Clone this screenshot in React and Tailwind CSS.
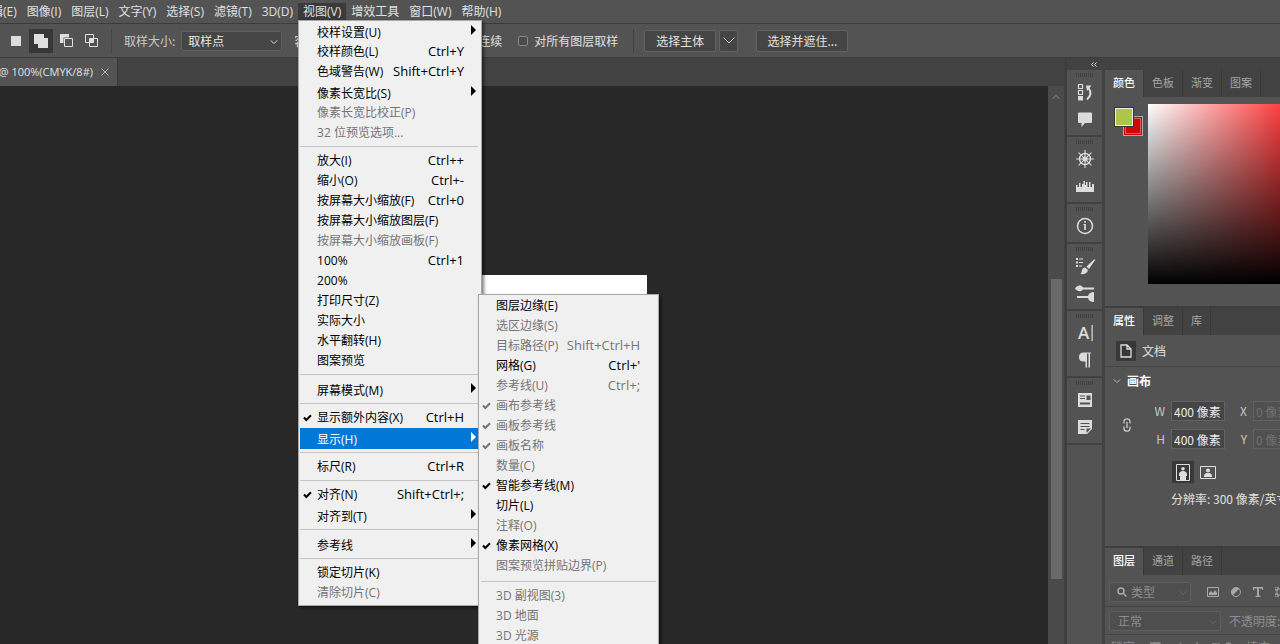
import React, { useState } from 'react';

const menuFont = "font-['Open_Sans','Noto_Sans_CJK_SC',sans-serif]";

const menuBar = ['编辑(E)', '图像(I)', '图层(L)', '文字(Y)', '选择(S)', '滤镜(T)', '3D(D)', '视图(V)', '增效工具', '窗口(W)', '帮助(H)'];

const viewMenu = [
  { label: '校样设置(U)', arrow: true },
  { label: '校样颜色(L)', keys: 'Ctrl+Y' },
  { label: '色域警告(W)', keys: 'Shift+Ctrl+Y' },
  { label: '像素长宽比(S)', arrow: true },
  { label: '像素长宽比校正(P)', disabled: true },
  { label: '32 位预览选项...', disabled: true },
  null,
  { label: '放大(I)', keys: 'Ctrl++' },
  { label: '缩小(O)', keys: 'Ctrl+-' },
  { label: '按屏幕大小缩放(F)', keys: 'Ctrl+0' },
  { label: '按屏幕大小缩放图层(F)' },
  { label: '按屏幕大小缩放画板(F)', disabled: true },
  { label: '100%', keys: 'Ctrl+1' },
  { label: '200%' },
  { label: '打印尺寸(Z)' },
  { label: '实际大小' },
  { label: '水平翻转(H)' },
  { label: '图案预览' },
  null,
  { label: '屏幕模式(M)', arrow: true },
  null,
  { label: '显示额外内容(X)', keys: 'Ctrl+H', checked: true },
  { label: '显示(H)', arrow: true, open: true },
  null,
  { label: '标尺(R)', keys: 'Ctrl+R' },
  null,
  { label: '对齐(N)', keys: 'Shift+Ctrl+;', checked: true },
  { label: '对齐到(T)', arrow: true },
  null,
  { label: '参考线', arrow: true },
  null,
  { label: '锁定切片(K)' },
  { label: '清除切片(C)', disabled: true },
];

const showMenu = [
  { label: '图层边缘(E)' },
  { label: '选区边缘(S)', disabled: true },
  { label: '目标路径(P)', keys: 'Shift+Ctrl+H', disabled: true },
  { label: '网格(G)', keys: "Ctrl+'" },
  { label: '参考线(U)', keys: 'Ctrl+;', disabled: true },
  { label: '画布参考线', checked: true, disabled: true },
  { label: '画板参考线', checked: true, disabled: true },
  { label: '画板名称', checked: true, disabled: true },
  { label: '数量(C)', disabled: true },
  { label: '智能参考线(M)', checked: true },
  { label: '切片(L)' },
  { label: '注释(O)', disabled: true },
  { label: '像素网格(X)', checked: true },
  { label: '图案预览拼贴边界(P)', disabled: true },
  null,
  { label: '3D 副视图(3)', disabled: true },
  { label: '3D 地面', disabled: true },
  { label: '3D 光源', disabled: true },
];

const Chevron = ({ className = '' }) => (
  <svg viewBox="0 0 10 6" className={`w-2 h-1.5 fill-none ${className}`} stroke="currentColor" strokeWidth="1.2">
    <path d="M1 1l4 4 4-4" />
  </svg>
);

const MenuItem = ({ item, children }) => {
  let color = 'text-black';
  if (item.disabled) color = 'text-[#757575]';
  if (item.open) color = 'text-white';
  return (
    <li className="relative">
      <button
        type="button"
        disabled={item.disabled}
        className={`flex w-full items-center pl-[17px] pr-3.5 text-left whitespace-nowrap ${color} ${item.arrow ? 'h-[21px] pt-0.5' : 'h-5'} ${item.open ? 'bg-[#0078d7]' : ''}`}
      >
        {item.checked && (
          <svg viewBox="0 0 9 8" className="absolute left-[3px] top-1.5 w-[9px] h-2 fill-none" stroke="currentColor" strokeWidth="2">
            <path d="M1 3.5L3.3 6 8 1.2" />
          </svg>
        )}
        <span className="flex-1">{item.label}</span>
        {item.keys && <span className="text-[13px]">{item.keys}</span>}
        {item.arrow && (
          <svg viewBox="0 0 5 10" className="absolute right-0.5 top-1 w-[5px] h-2.5" fill="currentColor">
            <path d="M0 0l5 5-5 5z" />
          </svg>
        )}
      </button>
      {children}
    </li>
  );
};

const ViewMenu = () => (
  <ul className={`absolute left-0 top-full z-20 w-[184px] border border-[#a8a8a8] bg-[#f0f0f0] pl-px pr-[3px] pb-0.5 text-xs shadow-[2px_2px_3px_rgba(0,0,0,0.5)] ${menuFont}`}>
    {viewMenu.map((item, i) =>
      item ? (
        <MenuItem key={i} item={item}>
          {item.open && (
            <ul className="absolute left-full -top-[134px] z-30 w-[181px] border border-[#a8a8a8] bg-[#f0f0f0] pr-1 pt-px pb-2 text-xs text-black shadow-[2px_2px_3px_rgba(0,0,0,0.5)]">
              {showMenu.map((sub, j) =>
                sub ? <MenuItem key={j} item={sub} /> : <li key={j} className="mt-[5px] mb-1 ml-0.5 -mr-0.5 border-t border-[#c4c4c4]" />
              )}
            </ul>
          )}
        </MenuItem>
      ) : (
        <li key={i} className="mt-[3px] mb-1 border-t border-[#c4c4c4]" />
      )
    )}
  </ul>
);

const MenuBar = ({ open, setOpen }) => (
  <nav className={`flex h-[23px] items-start pt-[3px] -ml-[26px] text-xs ${menuFont}`}>
    {menuBar.map((name) => (
      <div key={name} className="relative">
        <button
          type="button"
          onClick={() => setOpen(name === '视图(V)' && !open)}
          className={`block h-[17px] px-[5px] whitespace-nowrap leading-4 ${name === '视图(V)' && open ? 'bg-[#3a3a3a]' : ''}`}
        >
          {name}
        </button>
        {name === '视图(V)' && open && <ViewMenu />}
      </div>
    ))}
  </nav>
);

const OptionsBar = () => (
  <div className="flex h-[35px] items-center border-y border-[#3c3c3c] pl-1 whitespace-nowrap">
    <div className="flex gap-px">
      <button type="button" aria-label="新选区" className="flex size-6 items-center justify-center">
        <span className="size-2.5 bg-[#dedede]" />
      </button>
      <button type="button" aria-label="添加到选区" className="flex size-6 items-center justify-center bg-[#373737]">
        <svg viewBox="0 0 14 14" className="size-3.5" fill="#dedede"><path d="M0 0h10v4h4v10H4v-4H0z" /></svg>
      </button>
      <button type="button" aria-label="从选区减去" className="flex size-6 items-center justify-center">
        <svg viewBox="0 0 13 13" className="size-[13px]" fill="#dedede">
          <path d="M0 0h9v3.5H3.5V9H0z" />
          <path d="M4.5 4.5h8v8h-8z" fill="none" stroke="#dedede" />
        </svg>
      </button>
      <button type="button" aria-label="与选区交叉" className="flex size-6 items-center justify-center">
        <svg viewBox="0 0 13 13" className="size-[13px]" fill="none" stroke="#dedede">
          <path d="M.5 .5h8v8h-8zM4.5 4.5h8v8h-8z" />
          <path d="M5 5h3v3H5z" fill="#dedede" />
        </svg>
      </button>
    </div>
    <div className="ml-2 h-6 border-l border-[#444]" />
    <label htmlFor="sample" className="ml-3 text-[#c8c8c8]">取样大小:</label>
    <div className="relative ml-1.5 w-[101px] text-[#e6e6e6]">
      <select id="sample" className="h-5 w-full appearance-none rounded-xs border border-[#606060] bg-[#454545] pl-1.5">
        <option>取样点</option>
      </select>
      <Chevron className="absolute right-1 top-2 pointer-events-none" />
    </div>
    <div className="ml-3 flex w-[208px] items-center justify-between">
      <label>容差: <input defaultValue="32" className="w-8 border border-[#606060] bg-[#454545] px-1" /></label>
      <label>消除锯齿</label>
      <label>连续</label>
    </div>
    <label className="ml-4 flex items-center gap-1.5">
      <input type="checkbox" className="size-2.5 appearance-none rounded-xs border border-[#888] bg-[#4a4a4a]" />
      对所有图层取样
    </label>
    <div className="ml-[15px] h-6 border-l border-[#404040]" />
    <button type="button" className="ml-2.5 h-[22px] rounded-xs border border-[#626262] bg-[#454545] px-[11px]">选择主体</button>
    <button type="button" aria-label="选择主体选项" className="ml-[3px] flex h-[22px] w-[19px] items-center justify-center rounded-xs border border-[#626262] bg-[#454545]">
      <svg viewBox="0 0 12 7" className="w-3 h-[7px] fill-none stroke-[#c8c8c8]"><path d="M.5 .5L6 6 11.5 .5" /></svg>
    </button>
    <button type="button" className="ml-[18px] h-[22px] rounded-xs border border-[#626262] bg-[#454545] px-2.5">选择并遮住...</button>
  </div>
);

const iconGroups = [
  [
    <>
      <path d="M2.5 1.500h4v4h-4zM2.500 7.500h4v4h-4z" fill="none" stroke="currentColor" strokeWidth="1.200" />
      <path d="M2 13h5v4.500H2z" />
      <path d="M10 2.500h5.500L11 8z" />
      <path d="M12.500 5q4.500 6-1.500 11.500" fill="none" stroke="currentColor" strokeWidth="2" />
    </>,
    <path d="M3 2.500h12q1 0 1 1V12q0 1-1 1H9l-3.500 4v-4H3q-1 0-1-1V3.500q0-1 1-1z" />,
  ],
  [
    <>
      <path d="M9 0v18M0 9h18M2.600 2.600l12.800 12.800M2.600 15.400L15.400 2.600" stroke="currentColor" strokeWidth="1.100" />
      <circle cx="9" cy="9" r="5.500" fill="none" stroke="currentColor" strokeWidth="1.400" />
      <circle cx="9" cy="9" r="2.500" />
    </>,
    <path d="M0 15V8h1.500v2H3V6h1.500v4H6V7h1.500V4H9v4h1V5h1.500v5H13V5h1.500v5H16V7h2v8z" />,
  ],
  [
    <>
      <circle cx="9" cy="9" r="7.500" fill="none" stroke="currentColor" strokeWidth="1.500" />
      <path d="M8.200 4h1.700v1.700H8.200zM7.500 7h2.400v6H8.200V8h-.7z" />
    </>,
  ],
  [
    <>
      <path d="M0 1h2v2H0zM0 4.500h2v2H0zM0 8h2v2H0zM3 1.500h4v1H3zM3 5h4v1H3zM3 8.500h3v1H3z" />
      <path d="M19.500 2.500l-6.500 9.500-2.500-2.500 7.500-7zM9.200 10.500l2.800 2.500c-1 4-4.500 4.500-8 4 2-1 1.500-2 2-4 .6-2 2-2.800 3.200-2.500z" />
    </>,
    <path d="M-1 4.500c2-3.500 6-4 8-1h11v2H7c-2 3-6 2-8-1zM1 12h11c1-3 3-4 6-4v10c-3 0-5-1-6-4H1z" />,
  ],
  [
    <>
      <text x="2" y="15" fontSize="17" fontWeight="600" fontFamily="Open Sans">A</text>
      <path d="M15.500 1h1.200v16h-1.200z" />
    </>,
    <path d="M7.500 1.500H15v1h-1v14h-1.500v-14h-1.500v14H9.500V10.500h-2Q3 10.500 3 6t4.500-4.500z" />,
  ],
  [
    <path fillRule="evenodd" d="M2 2h14v14H2zM4 4.500v1h5v-1zM4 7v1h5V7zM10.500 4.500V9h4V4.500zM4 11.500v2h10v-2z" />,
    <path fillRule="evenodd" d="M2 2h14v9l-5 5H2zM4.500 5v1h9V5zM4.500 8v1h9V8zM4.500 11v1h4v-1zM10.500 10.500v4.500l4.500-4.500z" />,
  ],
];

const IconStrip = () => (
  <div className="w-[35px] shrink-0 bg-[#535353] text-[#dcdcdc]">
    {iconGroups.map((group, i) => (
      <div key={i} className="flex flex-col items-center border-b-2 border-[#414141] pt-[3px] pb-[3px]">
        <div className="mb-px h-1 w-[18px] bg-[repeating-linear-gradient(90deg,#404040_0_1px,#535353_1px_2px)]" />
        {group.map((icon, j) => (
          <button key={j} type="button" className="flex h-[27px] w-full items-center justify-center">
            <svg viewBox="0 0 18 18" className="size-[18px] overflow-visible" fill="currentColor">{icon}</svg>
          </button>
        ))}
      </div>
    ))}
  </div>
);

const Tabs = ({ names }) => (
  <div className="flex h-[27px] bg-[#424242] text-[11px]">
    {names.map((name, i) => (
      <button
        key={name}
        type="button"
        className={`px-2 border-r border-[#383838] whitespace-nowrap pb-0.5 ${i === 0 ? 'bg-[#535353] text-white font-medium' : 'text-[#a5a5a5]'}`}
      >
        {name}
      </button>
    ))}
  </div>
);

const ColorPanel = () => (
  <section>
    <Tabs names={['颜色', '色板', '渐变', '图案']} />
    <div className="flex pt-[7px] pb-[22px] pl-2.5">
      <div className="relative mt-1 mr-[5px] h-8 w-7 shrink-0">
        <div className="absolute right-0 top-2 size-5 border border-[#aaa] bg-[#cc0808] outline-1 -outline-offset-3 outline-[#e05a5a]" />
        <div className="absolute left-0 top-0 size-[18px] border border-[#eee] bg-[#adc64a] outline-1 outline-[#333]" />
      </div>
      <div className="h-[180px] flex-1 bg-[linear-gradient(to_top,#000,transparent),linear-gradient(to_right,#fff,#ff4040)]" />
    </div>
  </section>
);

const SizeField = ({ name, value, muted }) => (
  <label className="flex h-5 items-center gap-1.5">
    <span className="w-3 text-right text-[#c8c8c8]">{name}</span>
    <input
      defaultValue={value}
      disabled={muted}
      className={`h-5 w-[54px] border border-[#626262] pl-0.5 ${muted ? 'bg-[#505050] text-[#707070]' : 'bg-[#454545] text-[#ececec]'}`}
    />
  </label>
);

const PropertiesPanel = () => (
  <section className="h-[240px] shrink-0 border-t-2 border-[#3d3d3d] text-xs">
    <Tabs names={['属性', '调整', '库']} />
    <div className="flex h-8 items-center gap-1.5 border-b border-[#454545] pl-[11px]">
      <span className="flex size-5 items-center justify-center bg-[#383838]">
        <svg viewBox="0 0 12 14" className="w-3 h-3.5 fill-none stroke-[#dcdcdc]" strokeWidth="1.300"><path d="M1 1h6l4 4v8H1zM7 1v4h4" /></svg>
      </span>
      文档
    </div>
    <h3 className="flex items-center gap-1.5 pt-1 pl-2 font-bold text-white leading-5"><Chevron className="text-[#bbb]" />画布</h3>
    <div className="mt-2.5 flex items-center pl-[18px] whitespace-nowrap">
      <svg viewBox="0 0 8 14" className="mr-[22px] w-2 h-3.5 shrink-0 fill-none stroke-[#c8c8c8]" strokeWidth="1.300">
        <path d="M1 5.500V3.500a3 2.700 0 016 0v2M1 8.500v2a3 2.700 0 006 0v-2M4 4v6" />
      </svg>
      <div className="flex flex-col gap-2">
        <SizeField name="W" value="400 像素" />
        <SizeField name="H" value="400 像素" />
      </div>
      <div className="ml-2.5 flex flex-col gap-2">
        <SizeField name="X" value="0 像素" muted />
        <SizeField name="Y" value="0 像素" muted />
      </div>
    </div>
    <div className="mt-3 ml-[67px] flex items-center gap-1.5">
      <button type="button" aria-label="纵向" className="flex size-[22px] items-center justify-center bg-[#383838]">
        <svg viewBox="0 0 14 17" className="w-3.5 h-[17px]" fill="#dedede">
          <path d="M.5 .5h13v16H.5z" fill="none" stroke="#dedede" />
          <circle cx="7" cy="4.800" r="1.800" /><path d="M3 10.500Q3 7 7 7t4 3.500V12h-1v4H4v-4H3z" />
        </svg>
      </button>
      <button type="button" aria-label="横向">
        <svg viewBox="0 0 16 13" className="w-4 h-[13px]" fill="#dedede">
          <path d="M.5 .5h15v12H.5z" fill="none" stroke="#dedede" />
          <circle cx="8" cy="4.500" r="2" /><path d="M4 11V9.500Q4 7 8 7t4 2.500V11z" />
        </svg>
      </button>
    </div>
    <p className="mt-2 ml-[66px] whitespace-nowrap">分辨率: 300 像素/英寸</p>
  </section>
);

const LayersPanel = () => (
  <section className="border-t-2 border-[#3d3d3d] text-xs text-[#8e8e8e]">
    <Tabs names={['图层', '通道', '路径']} />
    <div className="flex h-8 items-center gap-4 border-b border-[#444] pt-0.5 pl-1">
      <div className="relative w-[82px] shrink-0">
        <svg viewBox="0 0 10 10" className="absolute left-2 top-[5px] size-2.5 fill-none stroke-[#aaa]" strokeWidth="1.500"><circle cx="4" cy="4" r="3" /><path d="M6.200 6.200L9.500 9.500" /></svg>
        <select aria-label="类型" className="h-5 w-full appearance-none rounded-xs border border-[#5e5e5e] bg-[#4e4e4e] pl-[21px]"><option>类型</option></select>
        <Chevron className="absolute right-1 top-2 text-[#6a6a6a] pointer-events-none" />
      </div>
      <div className="flex shrink-0 items-center gap-3 text-[#a8a8a8]">
        <svg viewBox="0 0 12 10" className="w-3 h-2.5" fill="currentColor"><path d="M.5 .5h11v9H.5z" fill="none" stroke="currentColor" /><path d="M2 8V6l2-2 2 2 2-3 2 3v2z" /></svg>
        <svg viewBox="0 0 10 10" className="size-2.5" fill="currentColor"><circle cx="5" cy="5" r="4.500" fill="none" stroke="currentColor" /><path d="M8.500 1.500A5 5 0 001.500 8.500z" /></svg>
        <svg viewBox="0 0 10 10" className="size-2.5" fill="currentColor"><path d="M0 0h10v3H9L8.500 1.500H6V8.500l1.500.5v1h-5V9L4 8.500v-7H1.500L1 3H0z" /></svg>
        <svg viewBox="0 0 10 10" className="size-2.5 fill-none" stroke="currentColor"><path d="M2 2h6v6H2zM0 0h3v3H0zM7 0h3v3H7zM0 7h3v3H0z" /></svg>
      </div>
    </div>
    <div className="flex h-7 items-center gap-2 border-b border-[#444] pl-1 whitespace-nowrap">
      <div className="relative w-[112px] shrink-0">
        <select aria-label="混合模式" className="h-5 w-full appearance-none rounded-xs border border-[#5e5e5e] bg-[#4e4e4e] pl-2"><option>正常</option></select>
        <Chevron className="absolute right-1 top-2 text-[#6a6a6a] pointer-events-none" />
      </div>
      不透明度:
    </div>
    <div className="flex items-center gap-3 pt-1 pl-1.5 whitespace-nowrap">
      锁定:
      <svg viewBox="0 0 84 10" className="w-[84px] h-2.5 fill-none" stroke="currentColor" strokeWidth="1.300">
        <path d="M1 1h9v8H1zM4 1v8M7 1v8M1 4h9M23 9l8-8M47 0v10M42 5h10M62 2h7v7M81 4V3a2.500 2 0 00-5 0v2h7v5h-8V5" />
      </svg>
      填充:
    </div>
  </section>
);

const App = () => {
  const [menuOpen, setMenuOpen] = useState(true);

  return (
    <div className="flex h-screen flex-col overflow-hidden bg-[#535353] text-xs text-[#e0e0e0] font-['Noto_Sans_CJK_SC',sans-serif]">
      <MenuBar open={menuOpen} setOpen={setMenuOpen} />
      <OptionsBar />
      <div className="flex min-h-0 flex-1">
        <main className="flex min-w-0 flex-1 flex-col">
          <div className="flex h-7 shrink-0 bg-[#424242]">
            <div className={`flex items-center gap-2 border-r border-[#383838] bg-[#535353] pr-2 text-[11px] w-[118px] justify-end whitespace-nowrap ${menuFont}`}>
              @ 100%(CMYK/8#)
              <button type="button" aria-label="关闭">
                <svg viewBox="0 0 8 8" className="size-2 fill-none stroke-[#b0b0b0]"><path d="M.5 .5l7 7M7.500 .5l-7 7" /></svg>
              </button>
            </div>
          </div>
          <div className="flex min-h-0 flex-1">
            <div className="flex flex-1 items-start justify-center bg-[#282828] pt-[189px]">
              <div className="size-[246px] bg-white" />
            </div>
            <div className="flex w-[17px] flex-col items-center border-r border-[#424242] bg-[#4a4a4a] pt-2">
              <Chevron className="rotate-180 text-[#999]" />
              <div className="mt-[179px] h-[300px] w-[11px] shrink-0 bg-[#696969]" />
            </div>
          </div>
        </main>
        <aside className="flex w-[215px] shrink-0 flex-col border-l-2 border-[#3d3d3d] bg-[#424242]">
          <div className="flex h-3 shrink-0 items-center pl-6">
            <svg viewBox="0 0 6 5" className="w-1.5 h-[5px] fill-none stroke-[#e0e0e0]"><path d="M2.500 .5l-2 2 2 2M5.500 .5l-2 2 2 2" /></svg>
          </div>
          <div className="flex min-h-0 flex-1 gap-[3px]">
            <IconStrip />
            <div className="flex min-w-0 flex-1 flex-col overflow-hidden bg-[#535353]">
              <ColorPanel />
              <PropertiesPanel />
              <LayersPanel />
            </div>
          </div>
        </aside>
      </div>
    </div>
  );
};

export default App;
